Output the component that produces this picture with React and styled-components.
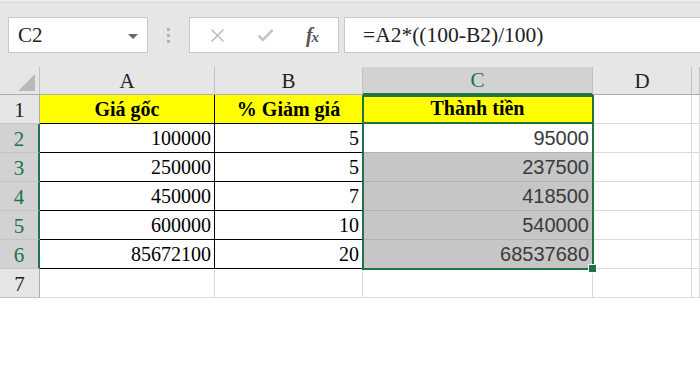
import React from 'react';
import styled, { createGlobalStyle } from 'styled-components';

const GlobalStyle = createGlobalStyle`
  html, body {
    margin: 0;
    padding: 0;
    background: #ffffff;
  }
  body {
    width: 700px;
    height: 375px;
    overflow: hidden;
    font-family: 'Liberation Serif', 'Times New Roman', serif;
  }
`;

const GREEN = '#217346';

const Toolbar = styled.div`
  display: flex;
  align-items: flex-start;
  height: 67px;
  box-sizing: border-box;
  padding: 17px 0 0 8px;
  background: #e6e6e6;
  box-shadow: inset 0 2px 0 #ececec, inset 0 3px 0 #d9d9d9;
`;

const NameBox = styled.div`
  display: flex;
  align-items: center;
  justify-content: space-between;
  width: 140px;
  height: 36px;
  box-sizing: border-box;
  padding: 0 9px 0 9px;
  background: #ffffff;
  border: 1px solid #c8c8c8;
  font-size: 21px;
  color: #222;
`;

const Caret = styled.span`
  width: 0;
  height: 0;
  border-left: 5px solid transparent;
  border-right: 5px solid transparent;
  border-top: 5px solid #666;
  margin-top: 2px;
`;

const Dots = styled.div`
  display: flex;
  flex-direction: column;
  gap: 3px;
  margin: 11px 19px 0 19px;

  span {
    width: 3px;
    height: 3px;
    background: #b3b3b3;
  }
`;

const FxBox = styled.div`
  display: flex;
  align-items: center;
  width: 150px;
  height: 36px;
  box-sizing: border-box;
  background: #ffffff;
  border: 1px solid #c8c8c8;
`;

const FxButton = styled.div`
  display: flex;
  align-items: center;
  justify-content: center;
  width: ${p => p.w}px;
  height: 100%;
`;

const FxLabel = styled.span`
  font-family: 'Liberation Serif', 'Times New Roman', serif;
  font-style: italic;
  font-weight: bold;
  font-size: 20px;
  color: #555;
  letter-spacing: -1px;

  small {
    font-size: 15px;
  }
`;

const FormulaInput = styled.div`
  display: flex;
  align-items: center;
  flex: 1;
  height: 36px;
  margin-left: 5px;
  margin-right: -2px;
  box-sizing: border-box;
  padding-left: 18px;
  background: #ffffff;
  border: 1px solid #c8c8c8;
  font-size: 21.5px;
  color: #222;
`;

const SheetWrap = styled.div`
  position: relative;
`;

const Sheet = styled.div`
  display: grid;
  grid-template-columns: 40px 175px 148px 230px 99px 1fr;
  grid-template-rows: 28px repeat(7, 29px);
`;

const Corner = styled.div`
  position: relative;
  background: #e6e6e6;
  border-right: 1px solid #c2c2c2;
  border-bottom: 1px solid #ababab;

  svg {
    position: absolute;
    right: 4px;
    bottom: 3px;
  }
`;

const ColHeader = styled.div`
  display: flex;
  align-items: center;
  justify-content: center;
  box-sizing: border-box;
  background: ${p => (p.active ? '#d2d2d2' : '#e6e6e6')};
  color: ${p => (p.active ? GREEN : '#222')};
  border-right: 1px solid #c2c2c2;
  border-bottom: ${p => (p.active ? `2px solid ${GREEN}` : '1px solid #ababab')};
  font-size: 21px;
  padding-top: 1px;
`;

const RowHeader = styled.div`
  display: flex;
  align-items: center;
  justify-content: center;
  box-sizing: border-box;
  background: ${p => (p.active ? '#d2d2d2' : '#e6e6e6')};
  color: ${p => (p.active ? GREEN : '#222')};
  border-right: ${p => (p.active ? `2px solid ${GREEN}` : '1px solid #ababab')};
  border-bottom: 1px solid #c4c4c4;
  font-size: 21px;
  padding-top: 2px;
`;

const Cell = styled.div`
  display: flex;
  align-items: flex-end;
  justify-content: ${p => (p.center ? 'center' : 'flex-end')};
  box-sizing: border-box;
  padding: 0 3px 2px;
  background: ${p => p.bg || '#ffffff'};
  border-right: 1px solid ${p => p.line || '#dadada'};
  border-bottom: ${p => p.bottom || `1px solid ${p.line || '#dadada'}`};
  font-family: ${p =>
    p.sans ? "'Liberation Sans', Arial, sans-serif" : "'Liberation Serif', 'Times New Roman', serif"};
  font-weight: ${p => (p.bold ? 'bold' : 'normal')};
  font-size: 20px;
  line-height: 23px;
  color: ${p => (p.sans ? '#3a3a3a' : '#000')};
  white-space: nowrap;
`;

const Selection = styled.div`
  position: absolute;
  left: 362px;
  top: 28px;
  width: 232px;
  height: 175px;
  box-sizing: border-box;
  border: 2px solid ${GREEN};
  pointer-events: none;
`;

const FillHandle = styled.span`
  position: absolute;
  right: -5px;
  bottom: -5px;
  width: 7px;
  height: 7px;
  background: ${GREEN};
  border: 1px solid #ffffff;
`;

const columns = ['A', 'B', 'C', 'D', ''];

const rows = [
  [100000, 5, 95000],
  [250000, 5, 237500],
  [450000, 7, 418500],
  [600000, 10, 540000],
  [85672100, 20, 68537680],
];

function CloseIcon() {
  return (
    <svg width="15" height="15" viewBox="0 0 15 15">
      <path d="M1.5 1.5 L13.5 13.5 M13.5 1.5 L1.5 13.5" stroke="#bdbdbd" strokeWidth="1.6" fill="none" />
    </svg>
  );
}

function CheckIcon() {
  return (
    <svg width="17" height="14" viewBox="0 0 17 14">
      <path d="M1.5 7.5 L6 12 L15.5 2" stroke="#c6c6c6" strokeWidth="2.6" fill="none" />
    </svg>
  );
}

export default function App() {
  return (
    <>
      <GlobalStyle />
      <Toolbar>
        <NameBox>
          C2
          <Caret />
        </NameBox>
        <Dots>
          <span />
          <span />
          <span />
        </Dots>
        <FxBox>
          <FxButton w={54}>
            <CloseIcon />
          </FxButton>
          <FxButton w={42}>
            <CheckIcon />
          </FxButton>
          <FxButton w={52}>
            <FxLabel>
              f<small>x</small>
            </FxLabel>
          </FxButton>
        </FxBox>
        <FormulaInput>=A2*((100-B2)/100)</FormulaInput>
      </Toolbar>

      <SheetWrap>
        <Sheet>
          <Corner>
            <svg width="17" height="17" viewBox="0 0 17 17">
              <polygon points="17,0 17,17 0,17" fill="#b9b9b9" />
            </svg>
          </Corner>
          {columns.map((c, i) => (
            <ColHeader key={i} active={c === 'C'}>
              {c}
            </ColHeader>
          ))}

          <RowHeader>1</RowHeader>
          <Cell bg="#ffff00" bold center line="#000">Giá gốc</Cell>
          <Cell bg="#ffff00" bold center line="#000">% Giảm giá</Cell>
          <Cell bg="#ffff00" bold center line="#000" bottom={`2px solid ${GREEN}`}>
            Thành tiền
          </Cell>
          <Cell />
          <Cell />

          {rows.map((r, i) => (
            <React.Fragment key={i}>
              <RowHeader active>{i + 2}</RowHeader>
              <Cell line="#000">{r[0]}</Cell>
              <Cell line="#000">{r[1]}</Cell>
              <Cell sans bg={i === 0 ? '#ffffff' : '#c6c6c6'} line="#b2b2b2">
                {r[2]}
              </Cell>
              <Cell />
              <Cell />
            </React.Fragment>
          ))}

          <RowHeader>7</RowHeader>
          <Cell />
          <Cell />
          <Cell />
          <Cell />
          <Cell />
        </Sheet>
        <Selection>
          <FillHandle />
        </Selection>
      </SheetWrap>
    </>
  );
}
